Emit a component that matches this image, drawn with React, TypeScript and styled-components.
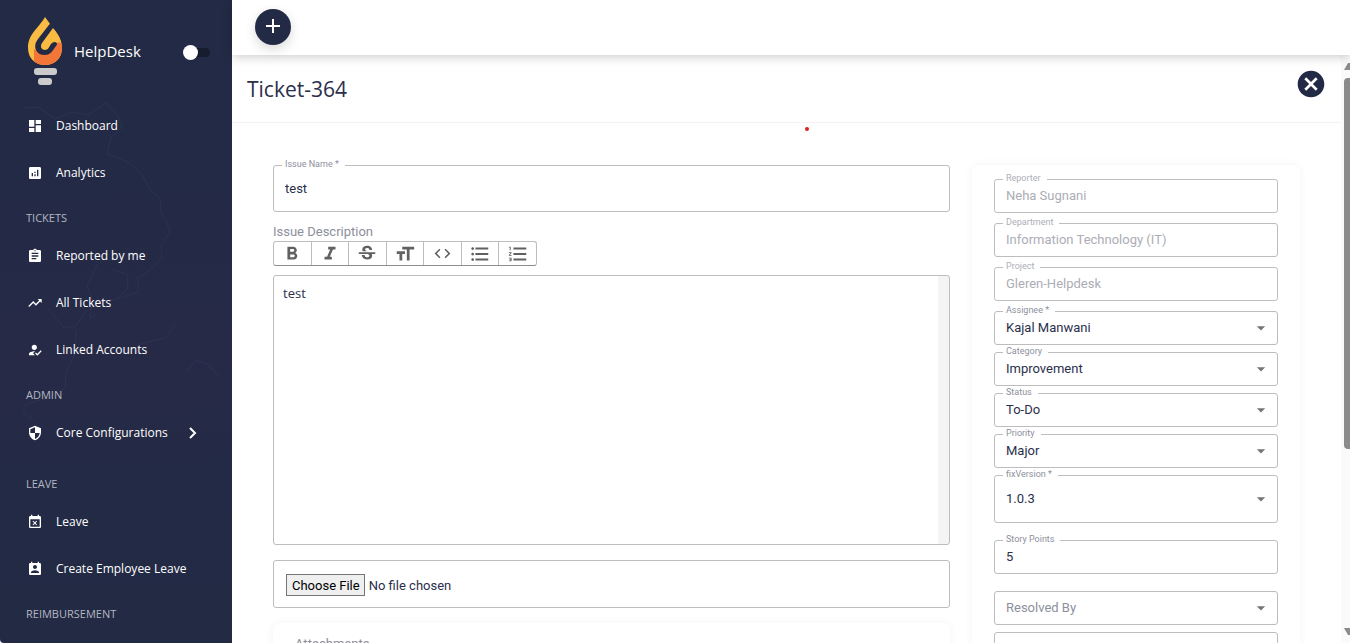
import React from "react";
import styled, { createGlobalStyle } from "styled-components";
import type { IconType } from "react-icons";
import {
  MdDashboard,
  MdAnalytics,
  MdAssignment,
  MdTrendingUp,
  MdHowToReg,
  MdSecurity,
  MdEventBusy,
  MdPermContactCalendar,
  MdCancel,
  MdFormatBold,
  MdFormatItalic,
  MdStrikethroughS,
  MdFormatSize,
  MdCode,
  MdFormatListBulleted,
  MdFormatListNumbered,
  MdArrowDropDown,
} from "react-icons/md";

const navy = "#232a45";
const ink = "#2b2f4c";
const muted = "#8d8f9c";
const line = "#bdbdbd";
const humanist = '"Open Sans", "Noto Sans", sans-serif';
const grotesk = 'Roboto, "Liberation Sans", sans-serif';

const GlobalStyle = createGlobalStyle`
  *, *::before, *::after { box-sizing: border-box; }
  body { margin: 0; background: #fff; color: ${ink}; font: 13px/20px ${grotesk}; }
  button, input, select, textarea { font: inherit; color: inherit; }
`;

const Shell = styled.div`
  display: flex;
  height: 100vh;
  overflow: hidden;
`;

const Sidebar = styled.aside`
  position: relative;
  flex: 0 0 232px;
  overflow: hidden;
  background: linear-gradient(178deg, #232a45 0%, #232a45 28%, #262a47 55%, #252a46 66%, #222a45 76%, #232a44 100%);
  color: #fff;
  font-family: ${humanist};
  border-bottom-left-radius: 4px;
`;

const MapLines = styled.svg`
  position: absolute;
  inset: 0;
  width: 100%;
  height: 643px;
  pointer-events: none;
`;

const Brand = styled.div`
  position: relative;
  display: flex;
  align-items: center;
  height: 102px;
  padding: 0 22px 0 27px;
`;

const BrandName = styled.span`
  margin-left: 11px;
  flex: 1;
  font-size: 15px;
  line-height: 22px;
`;

const Toggle = styled.input`
  appearance: none;
  position: relative;
  width: 20px;
  height: 9px;
  margin: 2px 0 0;
  border-radius: 5px;
  background: #171c2e;
  &::before {
    content: "";
    position: absolute;
    left: -7px;
    top: -3px;
    width: 15px;
    height: 15px;
    border-radius: 50%;
    background: #fff;
  }
`;

const Nav = styled.nav`
  position: relative;
`;

const NavHeading = styled.h2<{ $spaced?: boolean }>`
  height: 36px;
  margin: ${(p) => (p.$spaced ? 6 : 0)}px 0 0;
  padding: 12px 26px 0;
  font-size: 11px;
  font-weight: 400;
  line-height: 20px;
  color: #b4b7c2;
`;

const NavLink = styled.a`
  display: flex;
  align-items: center;
  height: 47px;
  padding: 0 34px 0 27px;
  color: #fff;
  font-size: 12px;
  text-decoration: none;
  white-space: nowrap;
`;

const NavText = styled.span`
  flex: 1;
  margin-left: 13px;
`;

const Main = styled.main`
  display: flex;
  flex-direction: column;
  flex: 1;
  min-width: 0;
`;

const TopBar = styled.header`
  position: relative;
  z-index: 1;
  flex: 0 0 55px;
  padding: 9px 23px;
  background: #fff;
  box-shadow: 0 2px 10px rgba(0, 0, 0, 0.2);
`;

const AddButton = styled.button`
  display: grid;
  place-items: center;
  width: 36px;
  height: 36px;
  padding: 0 0 2px;
  border: 0;
  border-radius: 50%;
  background: ${navy};
  box-shadow: 0 4px 12px rgba(0, 0, 0, 0.15);
`;

const Body = styled.div`
  display: flex;
  flex: 1;
  min-height: 0;
  background: #fafafa;
`;

const Page = styled.section`
  flex: 1;
  min-width: 0;
  overflow: hidden;
  background: #fff;
  border-top-right-radius: 6px;
`;

const TitleRow = styled.div`
  position: relative;
  display: flex;
  align-items: center;
  justify-content: space-between;
  height: 68px;
  padding: 0 14px 0 15px;
  border-bottom: 1px solid #f3f3f3;
`;

const Title = styled.h1`
  margin: 0;
  font: 400 21px/32px ${humanist};
`;

const CloseButton = styled.button`
  display: flex;
  margin-bottom: 10px;
  padding: 0;
  border: 0;
  background: none;
  color: ${navy};
`;

const RecordDot = styled.span`
  position: absolute;
  left: 52%;
  top: 72px;
  width: 4px;
  height: 4px;
  margin-left: -4px;
  border-radius: 50%;
  background: #e02020;
`;

const Columns = styled.div`
  display: grid;
  grid-template-columns: minmax(0, 677fr) minmax(0, 328fr);
  column-gap: 22px;
  align-items: start;
  padding: 42px 41px;
`;

const Stack = styled.div`
  display: flex;
  flex-direction: column;
`;

const Card = styled.div`
  border-radius: 8px;
  background: #fff;
  box-shadow: 0 0 10px rgba(0, 0, 0, 0.05);
`;

const DetailsCard = styled(Card)`
  display: flex;
  flex-direction: column;
  gap: 17px;
  padding: 14px 22px;
`;

const FieldGroup = styled.div<{ $gap: number }>`
  display: flex;
  flex-direction: column;
  gap: ${(p) => p.$gap}px;
`;

const Outline = styled.div<{ $height: number }>`
  position: relative;
  display: flex;
  align-items: center;
  height: ${(p) => p.$height}px;
  border: 1px solid ${line};
  border-radius: 3px;
`;

const FloatingLabel = styled.label<{ $faded?: boolean }>`
  position: absolute;
  left: 8px;
  top: -8px;
  padding: 0 6px 0 3px;
  background: #fff;
  color: ${(p) => (p.$faded ? "#adaeb8" : muted)};
  font-size: 9px;
  line-height: 12px;
`;

const TextInput = styled.input`
  width: 100%;
  height: 100%;
  padding: 0 11px 1px;
  border: 0;
  outline: 0;
  background: none;
  &:disabled {
    color: #acadb6;
  }
`;

const SelectInput = styled.select<{ $empty?: boolean }>`
  appearance: none;
  width: 100%;
  height: 100%;
  padding: 0 11px 1px;
  border: 0;
  outline: 0;
  background: none;
  color: ${(p) => (p.$empty ? muted : ink)};
`;

const Caret = styled(MdArrowDropDown)`
  position: absolute;
  right: 6px;
  color: #757575;
  pointer-events: none;
`;

const DescriptionLabel = styled.label`
  margin-top: 10px;
  line-height: 19px;
  color: ${muted};
`;

const Toolbar = styled.div`
  display: flex;
  width: 264px;
  height: 25px;
  border: 1px solid ${line};
  border-bottom-color: #8c8c8c;
  border-radius: 3px;
`;

const ToolButton = styled.button`
  display: grid;
  place-items: center;
  flex: 1;
  padding: 0;
  border: 0;
  background: none;
  color: #616161;
  & + & {
    border-left: 1px solid ${line};
  }
`;

const Editor = styled.textarea`
  height: 270px;
  margin: 9px 0 15px;
  padding: 7px 9px;
  border: 1px solid ${line};
  border-radius: 3px;
  outline: 0;
  resize: none;
  background: linear-gradient(#f4f4f4, #f4f4f4) right / 11px 100% no-repeat #fff;
  font-family: ${humanist};
`;

const FileInput = styled.input`
  width: 100%;
  height: 24px;
  padding: 2px 12px 0;
  line-height: 22px;
  &::file-selector-button {
    height: 22px;
    margin: 0 4px 0 0;
    padding: 0 4px 0 5px;
    border: 1px solid #767676;
    border-radius: 0;
    background: #efefef;
    color: #000;
    font: inherit;
  }
`;

const Attachments = styled(Card)`
  margin-top: 15px;
  padding: 11px 22px 40px;
  color: ${muted};
`;

const ScrollRail = styled.div`
  display: flex;
  flex-direction: column;
  align-items: flex-end;
  justify-content: space-between;
  flex: 0 0 9px;
  padding: 8px 0;
  overflow: hidden;
`;

const Thumb = styled.div`
  flex: 0 1 371px;
  width: 6px;
  margin: 8px 0 auto;
  border-radius: 4px 0 0 4px;
  background: #8b8b8b;
`;

function Logo() {
  return (
    <svg width="36" height="68" viewBox="0 0 36 68" aria-hidden="true">
      <path d="M18 0C20 3 23 6 25 10C30 16 35 22 35 31C35 41 28 48 18 48C8 48 1 41 1 31C1 17 11 12 18 0Z" fill="#f9bb41" />
      <path d="M7 32V44C10 47 14 48 18 48C28 48 35 41 35 31C35 29 35 27 34 26C31 25 29 26 27 28L18 38Z" fill="#f27638" />
      <path d="M26 6L12 24C8 30 11 36 18 36C23 36 24 32 28 27L20 28L14 28L27 8Z" fill={navy} stroke={navy} strokeWidth="4" strokeLinejoin="round" />
      <path d="M26 11C29 15 33 19 34 26C31 24 27 24 24 27C22 30 21 33 18 33C14 33 13 29 15 26Z" fill="#f9bb41" />
      <rect x="7" y="51" width="23" height="7" rx="3" fill="#cbcbcb" />
      <rect x="11" y="61" width="14" height="7" rx="3" fill="#cbcbcb" />
    </svg>
  );
}

function SidebarMap() {
  return (
    <MapLines viewBox="0 0 232 643" preserveAspectRatio="xMinYMin slice" fill="none" stroke="#41517a" strokeOpacity="0.22" aria-hidden="true">
      <path d="M25 108L38 107L55 119L72 112L88 115L106 103L118 116L122 128L111 137L107 154L130 163L143 176L150 190L160 198L161 212L166 220L170 232L161 245L162 258L150 270L138 278L138 292L120 298L98 303L85 312L76 326L64 328L47 307" />
      <path d="M97 264L87 286L92 300L90 318L96 315M113 270L127 274L128 288L118 298M76 330L75 354L66 372L65 388L48 398L24 405L24 414L34 420" />
      <path d="M175 324L166 338L140 344M187 372L196 360L208 364L220 378" />
    </MapLines>
  );
}

function NavItem({ icon: Icon, text, expandable }: { icon: IconType; text: string; expandable?: boolean }) {
  return (
    <NavLink href="#">
      <Icon size={16} />
      <NavText>{text}</NavText>
      {expandable && (
        <svg width="10" height="12" viewBox="0 0 10 12" fill="none" stroke="#fff" strokeWidth="2" aria-hidden="true">
          <path d="M2 1L7 6L2 11" />
        </svg>
      )}
    </NavLink>
  );
}

interface FieldProps {
  id: string;
  label?: string;
  value: string;
  height?: number;
  disabled?: boolean;
}

function TextField({ id, label, value, height = 34, disabled }: FieldProps) {
  return (
    <Outline $height={height}>
      {label && <FloatingLabel htmlFor={id} $faded={disabled}>{label}</FloatingLabel>}
      <TextInput id={id} defaultValue={value} disabled={disabled} />
    </Outline>
  );
}

function SelectField({ id, label, value, height = 34, empty }: FieldProps & { empty?: boolean }) {
  return (
    <Outline $height={height}>
      {label && <FloatingLabel htmlFor={id}>{label}</FloatingLabel>}
      <SelectInput id={id} $empty={empty} aria-label={label ? undefined : value || "Resolution"}>
        <option>{value}</option>
      </SelectInput>
      <Caret size={20} />
    </Outline>
  );
}

const tools: { name: string; icon: IconType; size?: number }[] = [
  { name: "Bold", icon: MdFormatBold },
  { name: "Italic", icon: MdFormatItalic },
  { name: "Strikethrough", icon: MdStrikethroughS },
  { name: "Text size", icon: MdFormatSize },
  { name: "Code", icon: MdCode, size: 19 },
  { name: "Bulleted list", icon: MdFormatListBulleted },
  { name: "Numbered list", icon: MdFormatListNumbered },
];

export default function App() {
  return (
    <Shell>
      <GlobalStyle />
      <Sidebar>
        <SidebarMap />
        <Brand>
          <Logo />
          <BrandName>HelpDesk</BrandName>
          <Toggle type="checkbox" aria-label="Collapse sidebar" />
        </Brand>
        <Nav>
          <NavItem icon={MdDashboard} text="Dashboard" />
          <NavItem icon={MdAnalytics} text="Analytics" />
          <NavHeading>TICKETS</NavHeading>
          <NavItem icon={MdAssignment} text="Reported by me" />
          <NavItem icon={MdTrendingUp} text="All Tickets" />
          <NavItem icon={MdHowToReg} text="Linked Accounts" />
          <NavHeading>ADMIN</NavHeading>
          <NavItem icon={MdSecurity} text="Core Configurations" expandable />
          <NavHeading $spaced>LEAVE</NavHeading>
          <NavItem icon={MdEventBusy} text="Leave" />
          <NavItem icon={MdPermContactCalendar} text="Create Employee Leave" />
          <NavHeading>REIMBURSEMENT</NavHeading>
        </Nav>
      </Sidebar>
      <Main>
        <TopBar>
          <AddButton aria-label="Add">
            <svg width="14" height="14" viewBox="0 0 14 14" stroke="#fff" strokeWidth="2" aria-hidden="true">
              <path d="M7 0V14M0 7H14" />
            </svg>
          </AddButton>
        </TopBar>
        <Body>
          <Page>
            <TitleRow>
              <Title>Ticket-364</Title>
              <CloseButton aria-label="Close">
                <MdCancel size={32} />
              </CloseButton>
              <RecordDot />
            </TitleRow>
            <Columns>
              <Stack>
                <TextField id="name" label="Issue Name *" value="test" height={47} />
                <DescriptionLabel htmlFor="description">Issue Description</DescriptionLabel>
                <Toolbar>
                  {tools.map(({ name, icon: Icon, size = 22 }) => (
                    <ToolButton key={name} aria-label={name}>
                      <Icon size={size} />
                    </ToolButton>
                  ))}
                </Toolbar>
                <Editor id="description" defaultValue="test" />
                <Outline $height={48}>
                  <FileInput type="file" aria-label="Attachment" />
                </Outline>
                <Attachments>Attachments</Attachments>
              </Stack>
              <DetailsCard>
                <FieldGroup $gap={7}>
                  <FieldGroup $gap={10}>
                    <TextField id="reporter" label="Reporter" value="Neha Sugnani" disabled />
                    <TextField id="department" label="Department" value="Information Technology (IT)" disabled />
                    <TextField id="project" label="Project" value="Gleren-Helpdesk" disabled />
                    <SelectField id="assignee" label="Assignee *" value="Kajal Manwani" />
                  </FieldGroup>
                  <SelectField id="category" label="Category" value="Improvement" />
                  <SelectField id="status" label="Status" value="To-Do" />
                  <SelectField id="priority" label="Priority" value="Major" />
                  <SelectField id="version" label="fixVersion *" value="1.0.3" height={48} />
                </FieldGroup>
                <TextField id="points" label="Story Points" value="5" />
                <FieldGroup $gap={7}>
                  <SelectField id="resolved" value="Resolved By" empty />
                  <SelectField id="resolution" value="" />
                </FieldGroup>
              </DetailsCard>
            </Columns>
          </Page>
          <ScrollRail aria-hidden="true">
            <svg width="6" height="7" viewBox="0 0 6 7">
              <path d="M0 7L4 0H6V7Z" fill="#8b8b8b" />
            </svg>
            <Thumb />
            <svg width="6" height="7" viewBox="0 0 6 7">
              <path d="M0 0H6V7H4Z" fill="#8b8b8b" />
            </svg>
          </ScrollRail>
        </Body>
      </Main>
    </Shell>
  );
}
